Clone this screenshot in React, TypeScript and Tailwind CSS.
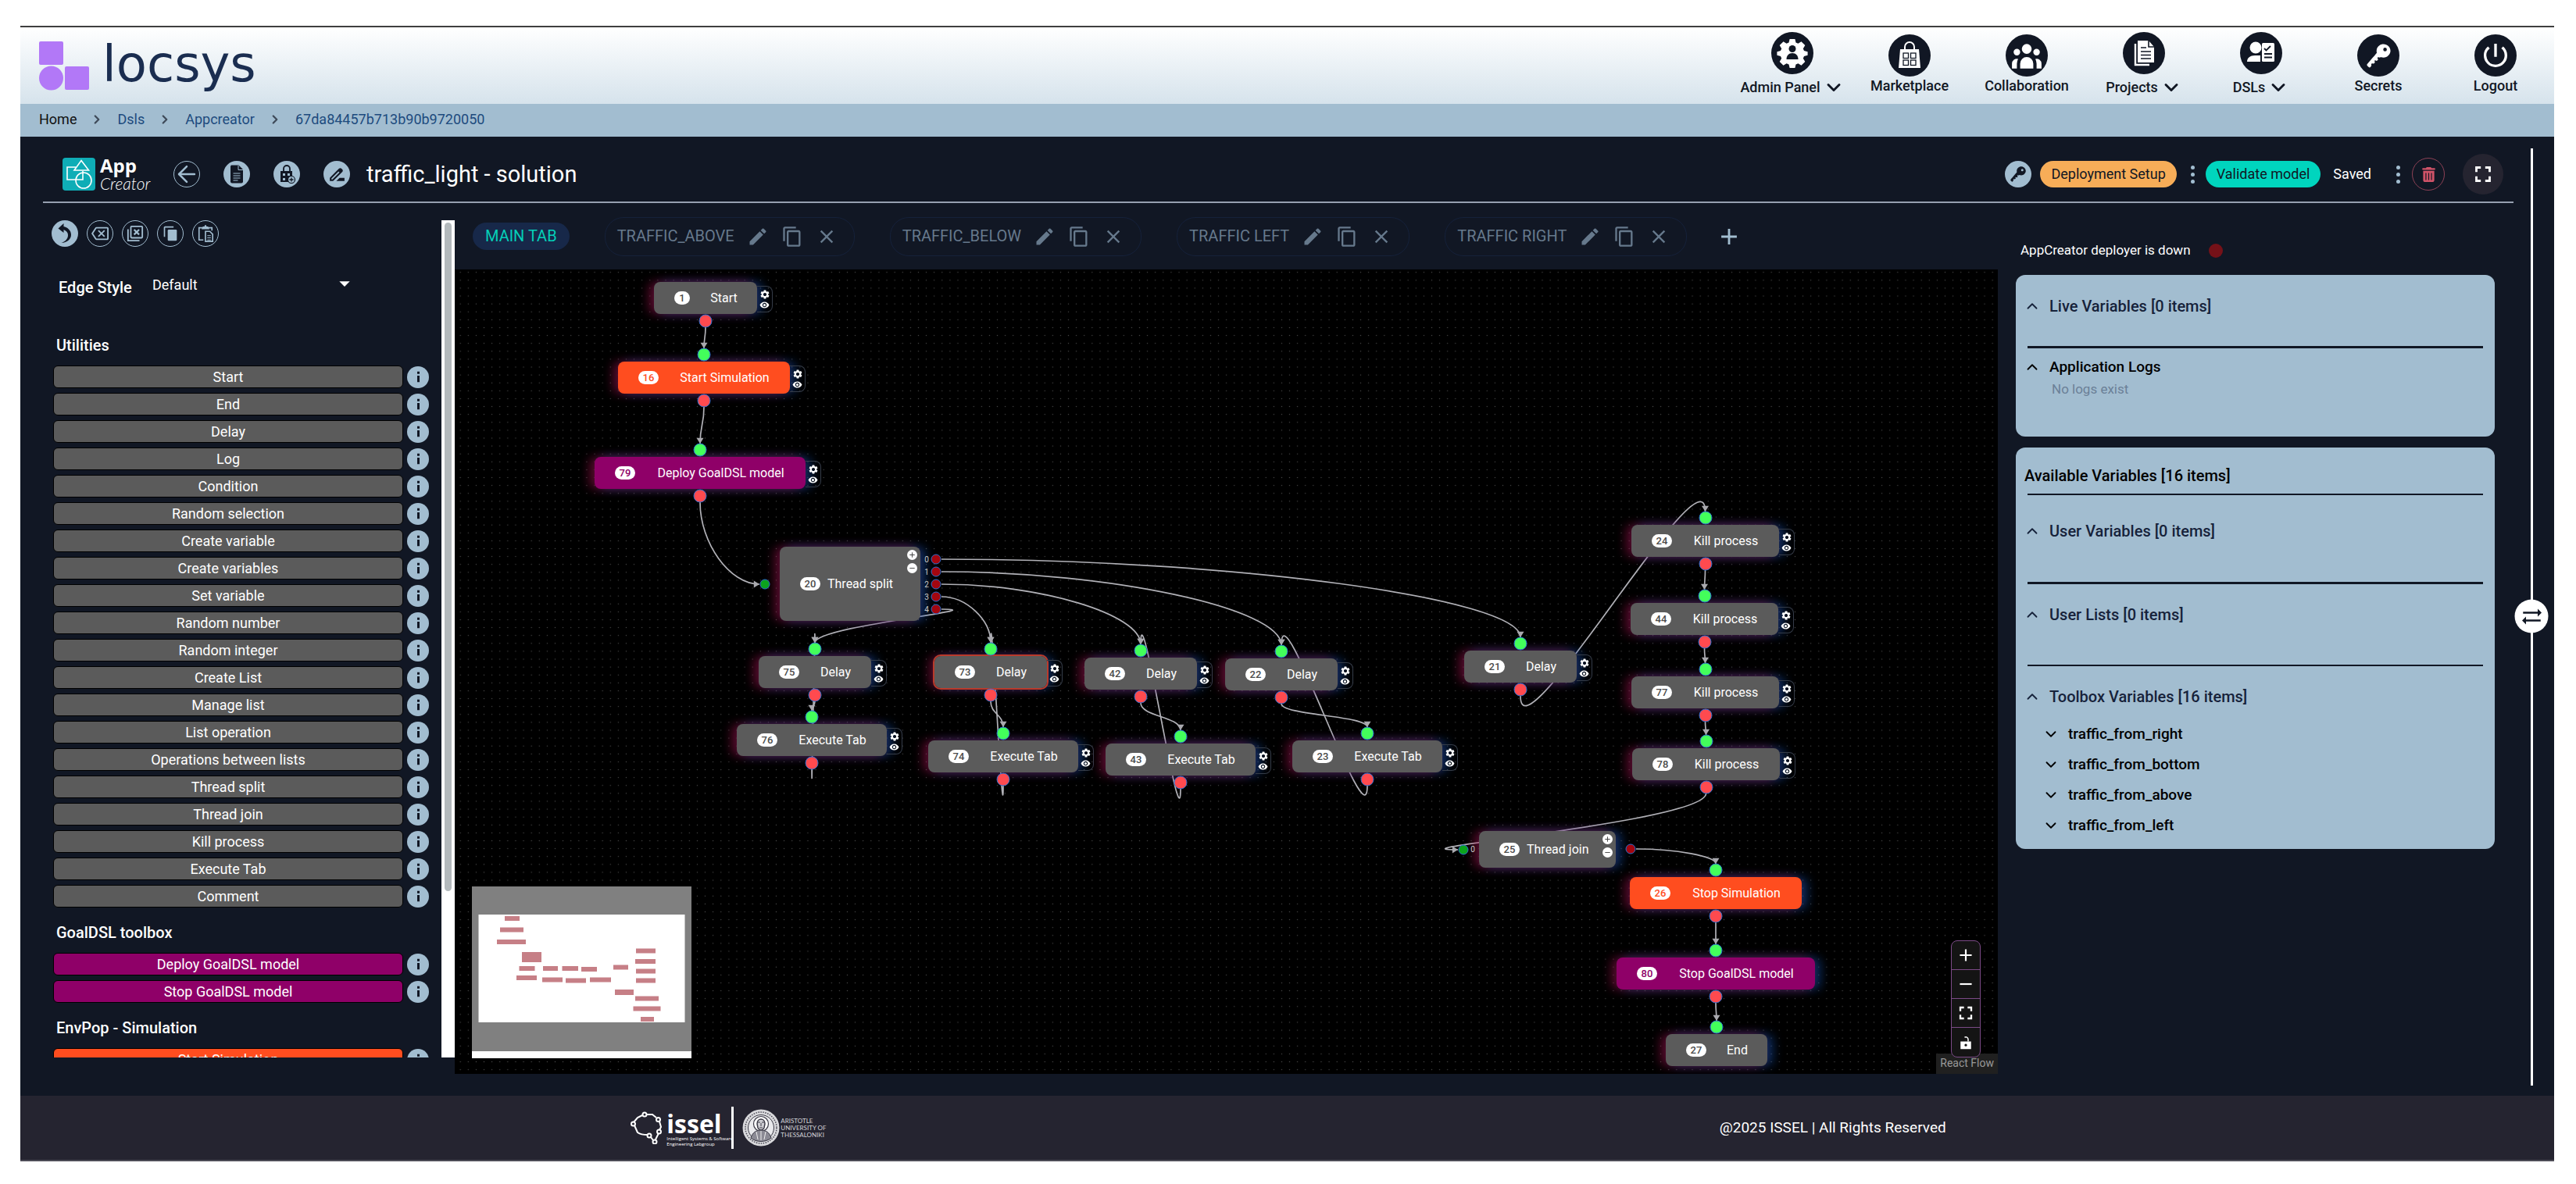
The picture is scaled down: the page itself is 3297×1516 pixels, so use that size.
import { ReactNode } from 'react';
import {
  MdAdd,
  MdArrowDropDown,
  MdClose,
  MdContentCopy,
  MdDriveFileRenameOutline,
  MdEdit,
  MdFullscreen,
  MdOutlineBackspace,
  MdPowerSettingsNew,
  MdRemove,
  MdSettings,
  MdSyncAlt,
  MdVisibility,
} from 'react-icons/md';
import { HiUserGroup } from 'react-icons/hi';
import { IoKey } from 'react-icons/io5';
import { FaTrashCan } from 'react-icons/fa6';
import { ArrowLeft, ChevronDown, ChevronRight, ChevronUp } from 'lucide-react';
import clsx from 'clsx';

/* ---------- ICONS ---------- */

const AdminIcon = () => (
  <svg viewBox="0 0 40 40" className="w-10 h-10">
    <path
      fill="#fff"
      d="M16.6 2h6.8l1.1 4.6 2.9 1.2 4.1-2.5 4.8 4.8-2.5 4.1 1.2 2.9 4.6 1.1v4.6l-4.6 1.1-1.2 2.9 2.5 4.1-4.8 4.8-4.1-2.5-2.9 1.2-1.1 4.6h-6.8l-1.1-4.6-2.9-1.2-4.1 2.5-4.8-4.8 2.5-4.1L5 23.9l-4.6-1.1v-4.6L5 17.1l1.2-2.9-2.5-4.1 4.8-4.8 4.1 2.5 2.9-1.2z"
    />
    <circle cx="20" cy="14.500" r="4.500" fill="#111724" />
    <path fill="#111724" d="M12.500 28c0-5 3-8 7.500-8s7.500 3 7.500 8z" />
  </svg>
);

const BagIcon = () => (
  <svg viewBox="0 0 40 40" className="w-10 h-10" fill="none">
    <path d="M14 13V9a6 6 0 0 1 12 0v4" stroke="#fff" strokeWidth="2" />
    <path d="M8 12h24l2 24H6z" fill="#fff" />
    <g stroke="#111724" strokeWidth="1.300">
      <rect x="12" y="17" width="6.500" height="6.500" />
      <rect x="21.500" y="17" width="6.500" height="6.500" />
      <rect x="12" y="26" width="6.500" height="6.500" />
      <rect x="21.500" y="26" width="6.500" height="6.500" />
    </g>
  </svg>
);

const ProjectsIcon = () => (
  <svg viewBox="0 0 40 40" className="w-10 h-10" fill="none">
    <path d="M9 8v27h18" stroke="#fff" strokeWidth="2.400" />
    <path d="M12 4h14l7 8v20H12z" fill="#fff" />
    <path d="M26 4v8h7M16 13h7M16 18h13M16 22.500h13M16 27h13" stroke="#111724" strokeWidth="1.600" />
  </svg>
);

const DslIcon = () => (
  <svg viewBox="0 0 40 40" className="w-10 h-10" fill="none">
    <circle cx="13" cy="13" r="7.500" fill="#fff" />
    <path d="M2 31c0-5 4-8 10-8h7v8z" fill="#fff" />
    <rect x="21" y="7" width="16" height="24" rx="1.500" fill="#fff" />
    <path d="M24 14l2.500 2.500L32 11M24 21h10M24 25.500h10" stroke="#111724" strokeWidth="1.800" />
  </svg>
);

const FileIcon = () => (
  <svg viewBox="0 0 18 24" className="w-[18px] h-6" fill="none">
    <path d="M2 0.500h9.500L17 6v15.500a2 2 0 0 1-2 2H3a2 2 0 0 1-2-2v-20z" fill="#111724" />
    <path d="M11 1v5.500h6" stroke="#a2bdd0" />
    <path d="M4.500 11h9M4.500 14h9M4.500 17h9M4.500 20h6" stroke="#a2bdd0" strokeWidth="1.100" />
  </svg>
);

const LockGridIcon = () => (
  <svg viewBox="0 0 24 24" className="w-6 h-6" fill="none" stroke="#111724">
    <path d="M8 8V5a4 4 0 0 1 8 0v3" strokeWidth="1.800" />
    <rect x="4" y="8" width="15" height="14" fill="#111724" stroke="none" />
    <path d="M7 11h3v3H7zM13 11h3v3h-3zM7 17h3v3H7z" fill="#a2bdd0" stroke="none" />
    <circle cx="18" cy="19" r="4.500" fill="#a2bdd0" strokeWidth="1.200" />
    <path d="M18 16.500v5M15.500 19h5" strokeWidth="1.300" />
  </svg>
);

const UndoIcon = () => (
  <svg viewBox="0 0 34 34" className="w-[34px] h-[34px]" fill="#111724">
    <path d="M8.500 10.500L15.500 4v12z" />
    <path d="M14 8c6.500.5 11 5 11 10.500 0 6-5 10-12.500 10.500 5.500-2 8.500-5.500 8.500-10 0-4-3-6.500-7-7z" />
  </svg>
);

const BoxesCloseIcon = () => (
  <svg viewBox="0 0 24 24" className="w-[22px] h-[22px]" fill="none" stroke="currentColor" strokeWidth="2">
    <rect x="6" y="2" width="16" height="16" rx="1" />
    <path d="M2 6v16h16" />
    <path d="M10.500 6.500l7 7M17.500 6.500l-7 7" strokeWidth="2.400" />
  </svg>
);

const CopyFillIcon = () => (
  <svg viewBox="0 0 24 24" className="w-5 h-5" fill="currentColor">
    <rect x="8" y="6" width="14" height="17" rx="1.500" />
    <path d="M2 17V3c0-1 1-2 2-2h13v2H4v14z" />
  </svg>
);

const PasteIcon = () => (
  <svg viewBox="0 0 24 24" className="w-[22px] h-[22px]" fill="none" stroke="currentColor" strokeWidth="1.800">
    <path d="M9 21H3V4h18v4" />
    <path d="M8 5l1-2h2l1-2 1 2h2l1 2z" fill="currentColor" />
    <path d="M12 9h6l4 4v10H12z" />
    <path d="M14.500 15h5M14.500 18h5M14.500 21h5" strokeWidth="1.200" />
  </svg>
);

const UnlockIcon = () => (
  <svg viewBox="0 0 24 24" className="w-[18px] h-[18px]" fill="#fff">
    <path d="M3 10h18v13H3zm9 4a2.200 2.200 0 1 0 0 4.400 2.200 2.200 0 0 0 0-4.400z" fillRule="evenodd" />
    <path d="M16 10V6a4 4 0 0 0-6-3" fill="none" stroke="#fff" strokeWidth="2" />
  </svg>
);

/* ---------- HEADER ---------- */

const navItems: { label: string; icon: ReactNode; menu?: boolean }[] = [
  { label: 'Admin Panel', icon: <AdminIcon />, menu: true },
  { label: 'Marketplace', icon: <BagIcon /> },
  { label: 'Collaboration', icon: <HiUserGroup size={42} /> },
  { label: 'Projects', icon: <ProjectsIcon />, menu: true },
  { label: 'DSLs', icon: <DslIcon />, menu: true },
  { label: 'Secrets', icon: <IoKey size={37} /> },
  { label: 'Logout', icon: <MdPowerSettingsNew size={40} /> },
];

const Header = () => (
  <header className="flex justify-between h-[100px] border-t-2 border-[#3f3f3f] bg-gradient-to-b from-white to-[#d6e3ec]">
    <a href="#home" className="flex items-center gap-[17px] pl-6">
      <svg viewBox="0 0 64 64" className="w-16 h-16" fill="#b278f7">
        <rect x="0" y="1" width="31" height="30" rx="2" />
        <circle cx="15.500" cy="48" r="15.500" />
        <rect x="33" y="33" width="31" height="30" rx="2" />
      </svg>
      <span className="font-['DejaVu_Sans',sans-serif] text-[64px] leading-[72px] text-[#1a2d50] pb-1">locsys</span>
    </a>
    <nav className="flex pt-[6px]">
      {navItems.map((item) => (
        <a key={item.label} href="#nav" className="w-[150px] flex flex-col items-center text-[#111724]">
          <span
            className={clsx(
              'w-[54px] h-[54px] rounded-full bg-[#111724] text-white flex items-center justify-center',
              item.menu ? 'mb-[3px]' : 'mt-[3px]',
            )}
          >
            {item.icon}
          </span>
          <span className="flex items-center gap-[3px] text-lg leading-6 font-medium">
            {item.label}
            {item.menu && <ChevronDown size={28} strokeWidth={2.5} />}
          </span>
        </a>
      ))}
    </nav>
  </header>
);

const Crumb = () => <ChevronRight size={18} strokeWidth={3} className="text-[#3e4a58]" />;

const Breadcrumbs = () => (
  <nav className="flex items-center gap-[17px] h-[42px] px-6 pb-[3px] bg-[#a2bdd0] text-lg text-[#1d4b7e]">
    <a href="#home" className="text-[#111]">Home</a>
    <Crumb />
    <a href="#dsls">Dsls</a>
    <Crumb />
    <a href="#appcreator">Appcreator</a>
    <Crumb />
    <a href="#model">67da84457b713b90b9720050</a>
  </nav>
);

/* ---------- TOOLBAR ---------- */

const RoundButton = ({ label, filled, children }: { label: string; filled?: boolean; children: ReactNode }) => (
  <button
    aria-label={label}
    className={clsx(
      'w-[34px] h-[34px] rounded-full flex items-center justify-center shrink-0',
      filled ? 'bg-[#a2bdd0] text-[#111724]' : 'border border-[#a2bdd0] text-[#a2bdd0]',
    )}
  >
    {children}
  </button>
);

const Dots = () => (
  <span className="flex flex-col gap-1">
    <i className="w-[5px] h-[5px] rounded-full bg-[#a2bdd0]" />
    <i className="w-[5px] h-[5px] rounded-full bg-[#a2bdd0]" />
    <i className="w-[5px] h-[5px] rounded-full bg-[#a2bdd0]" />
  </span>
);

const Toolbar = () => (
  <div className="flex items-center justify-between h-[72px] pl-[25px] border-b-2 border-[#97a0b0]">
    <div className="flex items-center gap-[29px]">
      <div className="flex items-center gap-[6px] w-[113px]">
        <svg viewBox="0 0 42 42" className="w-[42px] h-[42px] shrink-0" fill="none" stroke="#fff" strokeWidth="1.600">
          <rect width="42" height="42" rx="4" fill="#0fadb6" stroke="none" />
          <path d="M24 3.500L33.500 16H15z" />
          <path d="M17 12H6v16h20V17" />
          <circle cx="27" cy="29" r="10" />
        </svg>
        <div className="text-white">
          <div className="font-['Open_Sans',sans-serif] text-[24px] leading-6 font-bold">App</div>
          <div className="font-['Lato',sans-serif] text-[21px] leading-[22px] font-light italic">Creator</div>
        </div>
      </div>
      <div className="flex items-center gap-[30px]">
        <RoundButton label="Back"><ArrowLeft size={34} strokeWidth={1.75} className="shrink-0" /></RoundButton>
        <RoundButton label="Documentation" filled><FileIcon /></RoundButton>
        <RoundButton label="Access" filled><LockGridIcon /></RoundButton>
        <div className="flex items-center gap-[21px]">
          <RoundButton label="Rename" filled><MdDriveFileRenameOutline size={25} /></RoundButton>
          <h1 className="text-[29px] leading-9 text-white">traffic_light - solution</h1>
        </div>
      </div>
    </div>
    <div className="flex items-center pr-[13px]">
      <RoundButton label="Secrets" filled><IoKey size={24} /></RoundButton>
      <button className="ml-[11px] h-[34px] px-[14px] rounded-full bg-[#f7ad58] text-lg text-[#111724]">Deployment Setup</button>
      <span className="ml-[18px] mr-[14px]"><Dots /></span>
      <button className="h-[34px] px-[14px] rounded-full bg-[#00d5be] text-lg text-[#111724]">Validate model</button>
      <span className="ml-4 mr-8 text-lg text-white">Saved</span>
      <Dots />
      <button aria-label="Delete" className="ml-[15px] w-[42px] h-[42px] rounded-full border border-[#8c4155] text-[#cf5368] flex items-center justify-center">
        <FaTrashCan size={19} />
      </button>
      <button aria-label="Full screen" className="ml-[23px] w-[52px] h-[52px] rounded-full bg-[#252430] text-white flex items-center justify-center">
        <MdFullscreen size={34} />
      </button>
    </div>
  </div>
);

/* ---------- TOOLBOX ---------- */

const toolboxes = [
  {
    title: 'Utilities',
    color: 'bg-[#5b5b5b]',
    items: [
      'Start', 'End', 'Delay', 'Log', 'Condition', 'Random selection', 'Create variable', 'Create variables',
      'Set variable', 'Random number', 'Random integer', 'Create List', 'Manage list', 'List operation',
      'Operations between lists', 'Thread split', 'Thread join', 'Kill process', 'Execute Tab', 'Comment',
    ],
  },
  { title: 'GoalDSL toolbox', color: 'bg-[#8f0068]', items: ['Deploy GoalDSL model', 'Stop GoalDSL model'] },
  { title: 'EnvPop - Simulation', color: 'bg-[#ff4d1f]', items: ['Start Simulation'] },
];

const Toolbox = () => (
  <aside className="flex w-[527px] shrink-0 mt-[22px] mb-9 h-[1072px] overflow-hidden">
    <div className="flex-1 pl-[11px]">
      <div className="flex gap-[11px]">
        <RoundButton label="Undo" filled><UndoIcon /></RoundButton>
        <RoundButton label="Delete selected"><MdOutlineBackspace size={22} /></RoundButton>
        <RoundButton label="Clear all"><BoxesCloseIcon /></RoundButton>
        <RoundButton label="Copy"><CopyFillIcon /></RoundButton>
        <RoundButton label="Paste"><PasteIcon /></RoundButton>
      </div>
      <div className="flex items-center mt-8 pl-[9px] text-white">
        <label htmlFor="edge" className="w-[120px] pt-[6px] text-xl font-medium">Edge Style</label>
        <div className="relative w-[262px]">
          <select id="edge" className="w-full appearance-none bg-transparent text-lg">
            <option>Default</option>
          </select>
          <MdArrowDropDown size={32} className="absolute right-0 -top-1 pointer-events-none" />
        </div>
      </div>
      <div className="mt-[46px]">
        {toolboxes.map((box) => (
          <section key={box.title} className="mb-[18px]">
            <h2 className="pl-[6px] pb-3 text-xl leading-7 font-medium text-white">{box.title}</h2>
            <ul className="flex flex-col gap-[6px] pl-[2px]">
              {box.items.map((item) => (
                <li key={item} className="flex items-center gap-[5px]">
                  <button className={clsx('w-[448px] h-[29px] rounded-md border border-black text-lg leading-none text-white', box.color)}>
                    {item}
                  </button>
                  <button aria-label={`About ${item}`} className="w-7 h-7 rounded-full bg-[#a2bdd0] flex items-center justify-center">
                    <svg viewBox="0 0 12 20" className="w-[9px] h-[15px]" fill="#111724">
                      <rect x="4" y="1" width="4" height="4" />
                      <rect x="4" y="8" width="4" height="11" />
                    </svg>
                  </button>
                </li>
              ))}
            </ul>
          </section>
        ))}
      </div>
    </div>
    <div className="w-[17px] bg-white px-1 pt-[3px]">
      <div className="h-[856px] rounded-full bg-[#b3b9bc]" />
    </div>
  </aside>
);

/* ---------- TABS ---------- */

const tabs = ['TRAFFIC_ABOVE', 'TRAFFIC_BELOW', 'TRAFFIC LEFT', 'TRAFFIC RIGHT'];

const Tabs = () => (
  <div className="flex items-center gap-[45px] h-[85px] pl-[23px] text-[20px]">
    <button className="h-[35px] px-4 pb-0.5 rounded-full bg-[#172849] text-[#05cfb8]">MAIN TAB</button>
    {tabs.map((tab) => (
      <div key={tab} className="flex items-center gap-4 h-[50px] pl-[15px] pr-[21px] rounded-[24px] border border-[#15213a] text-[#66798c]">
        <button className="pb-0.5">{tab}</button>
        <button aria-label={`Rename ${tab}`}><MdEdit size={28} /></button>
        <button aria-label={`Duplicate ${tab}`}><MdContentCopy size={28} /></button>
        <button aria-label={`Close ${tab}`}><MdClose size={28} /></button>
      </div>
    ))}
    <button aria-label="Add tab" className="text-[#a2bdd0] -ml-2"><MdAdd size={34} /></button>
  </div>
);

/* ---------- FLOW CANVAS ---------- */

type FlowNode = {
  id: number;
  label: string;
  x: number;
  y: number;
  w: number;
  kind?: 'sim' | 'goal';
  tag?: boolean;
  selected?: boolean;
};

const nodes: FlowNode[] = [
  { id: 1, label: 'Start', x: 255, y: 16, w: 132, tag: true },
  { id: 16, label: 'Start Simulation', x: 209, y: 118, w: 220, kind: 'sim', tag: true },
  { id: 79, label: 'Deploy GoalDSL model', x: 179, y: 240, w: 270, kind: 'goal', tag: true },
  { id: 75, label: 'Delay', x: 389, y: 495, w: 144, tag: true },
  { id: 73, label: 'Delay', x: 614, y: 495, w: 144, tag: true, selected: true },
  { id: 42, label: 'Delay', x: 806, y: 497, w: 144, tag: true },
  { id: 22, label: 'Delay', x: 986, y: 498, w: 144, tag: true },
  { id: 76, label: 'Execute Tab', x: 361, y: 582, w: 192, tag: true },
  { id: 74, label: 'Execute Tab', x: 606, y: 603, w: 192, tag: true },
  { id: 43, label: 'Execute Tab', x: 833, y: 607, w: 192, tag: true },
  { id: 23, label: 'Execute Tab', x: 1072, y: 603, w: 192, tag: true },
  { id: 21, label: 'Delay', x: 1292, y: 488, w: 144, tag: true },
  { id: 24, label: 'Kill process', x: 1506, y: 327, w: 189, tag: true },
  { id: 44, label: 'Kill process', x: 1505, y: 427, w: 189, tag: true },
  { id: 77, label: 'Kill process', x: 1506, y: 521, w: 189, tag: true },
  { id: 78, label: 'Kill process', x: 1507, y: 613, w: 189, tag: true },
  { id: 26, label: 'Stop Simulation', x: 1504, y: 778, w: 220, kind: 'sim' },
  { id: 80, label: 'Stop GoalDSL model', x: 1487, y: 881, w: 254, kind: 'goal' },
  { id: 27, label: 'End', x: 1550, y: 979, w: 130 },
];

const byId = (id: number) => nodes.find((n) => n.id === id)!;
const bottomOf = (id: number) => ({ x: byId(id).x + byId(id).w / 2, y: byId(id).y + 58 });
const topOf = (id: number) => ({ x: byId(id).x + byId(id).w / 2, y: byId(id).y - 17 });

type Point = { x: number; y: number };

const reach = (d: number) => (d >= 0 ? d / 2 : 5.8 * Math.sqrt(-d));

const down = (s: Point, t: Point) => {
  const o = reach(t.y - s.y);
  return `M${s.x} ${s.y}C${s.x} ${s.y + o} ${t.x} ${t.y - o} ${t.x} ${t.y}`;
};
const downToLeft = (s: Point, t: Point) =>
  `M${s.x} ${s.y}C${s.x} ${s.y + reach(t.y - s.y)} ${t.x - reach(t.x - s.x)} ${t.y} ${t.x} ${t.y}`;
const rightToTop = (s: Point, t: Point) =>
  `M${s.x} ${s.y}C${s.x + reach(t.x - s.x)} ${s.y} ${t.x} ${t.y - reach(t.y - s.y)} ${t.x} ${t.y}`;

const splitPorts = [371, 387, 403, 419, 435];
const splitTargets = [21, 22, 42, 73, 75];

const edges = [
  ...[[1, 16], [16, 79], [75, 76], [73, 74], [42, 43], [22, 23], [76, 75], [74, 73], [43, 42], [23, 22],
    [21, 24], [24, 44], [44, 77], [77, 78], [26, 80], [80, 27]].map(([a, b]) => down(bottomOf(a), topOf(b))),
  downToLeft(bottomOf(79), { x: 390, y: 403 }),
  downToLeft(bottomOf(78), { x: 1284, y: 743 }),
  ...splitPorts.map((y, i) => rightToTop({ x: 623, y }, topOf(splitTargets[i]))),
  rightToTop({ x: 1512, y: 742 }, topOf(26)),
];

const glow = 'shadow-[-7px_0_13px_rgba(170,20,80,0.5),7px_0_13px_rgba(25,90,190,0.5)]';

const Badge = ({ id, className }: { id: number; className?: string }) => (
  <span
    className={clsx(
      'h-[17px] rounded-full bg-white text-[13px] leading-[17px] font-medium text-center shrink-0',
      id < 10 ? 'w-5' : 'w-[26px]',
      className,
    )}
  >
    {id}
  </span>
);

const Handle = ({ x, y, color, small }: { x: number; y: number; color: string; small?: boolean }) => (
  <span
    className={clsx('absolute -translate-1/2 rounded-full border border-[#2c6fce]', color, small ? 'size-[13px]' : 'size-[17px]')}
    style={{ left: x, top: y }}
  />
);

const NodeView = ({ node }: { node: FlowNode }) => (
  <>
    <div
      className={clsx(
        'absolute h-[41px] rounded-[8px] flex items-center pl-[26px] text-base text-white whitespace-nowrap',
        glow,
        node.kind === 'sim' ? 'bg-[#ff4d1f]' : node.kind === 'goal' ? 'bg-[#8f0068]' : 'bg-[#5b5b5b]',
        node.selected && 'outline-2 outline-[#b93a2b]',
      )}
      style={{ left: node.x, top: node.y, width: node.w }}
    >
      <Badge
        id={node.id}
        className={node.kind === 'sim' ? 'text-[#ff4d1f]' : node.kind === 'goal' ? 'text-[#8f0068]' : 'text-[#4b4b4b]'}
      />
      <span className="flex-1 ml-[26px] mr-[25px] text-center">{node.label}</span>
      {node.tag && (
        <div className="absolute left-full top-[5px] w-5 h-[34px] rounded-r-lg border border-l-0 border-[#353c48] flex flex-col items-center pt-[3px]">
          <MdSettings size={14} />
          <MdVisibility size={13} />
        </div>
      )}
    </div>
    {node.id !== 1 && <Handle x={node.x + node.w / 2} y={node.y - 9} color="bg-[#43ff5b]" />}
    {node.id !== 27 && <Handle x={node.x + node.w / 2} y={node.y + 50} color="bg-[#ff4a4f]" />}
  </>
);

const PlusMinus = () => (
  <div className="absolute top-1 right-1 flex flex-col gap-1">
    <button aria-label="Add thread" className="size-[13px] rounded-full bg-white text-[#444] flex items-center justify-center">
      <MdAdd size={11} />
    </button>
    <button aria-label="Remove thread" className="size-[13px] rounded-full bg-white text-[#444] flex items-center justify-center">
      <MdRemove size={11} />
    </button>
  </div>
);

const MiniMap = () => (
  <svg viewBox="0 0 281 220" className="absolute left-[22px] bottom-5 w-[281px] h-[220px]">
    <rect width="281" height="220" fill="#fff" />
    <rect width="281" height="211" fill="#808080" />
    <rect x="8.500" y="36" width="264" height="138" fill="#fff" />
    <g fill="#c67f86">
      {[
        [42, 38, 19, 6], [36, 52.5, 30, 6], [32, 68, 37, 6], [64, 84, 25, 13], [60.5, 102, 20, 6],
        [91, 102, 19, 6], [115.5, 102, 20.5, 6], [140, 103, 20, 6], [57, 114, 26, 6], [90, 116.5, 26, 6],
        [120, 117.5, 26, 6], [151, 116.5, 27, 6], [181, 100.5, 19, 6], [210, 79.5, 25, 6],
        [209, 93, 26, 6], [210, 105.5, 25, 6], [210, 117.5, 25, 6], [183, 132, 24, 7], [209, 140.5, 30, 6],
        [206.5, 153.5, 35, 6], [216, 167, 17, 6],
      ].map(([x, y, w, h]) => (
        <rect key={`${x}-${y}`} x={x} y={y} width={w} height={h} />
      ))}
    </g>
  </svg>
);

const Canvas = () => (
  <div className="relative min-h-[1030px] bg-black overflow-hidden">
    <svg className="absolute inset-0 w-full h-full">
      <defs>
        <pattern id="dots" x="2.150" y="-1.350" width="10.108" height="10.108" patternUnits="userSpaceOnUse">
          <circle cx="5.050" cy="5.050" r="0.700" fill="#484848" />
        </pattern>
        <marker id="arrow" viewBox="-10 -10 20 20" refX="0" refY="0" markerWidth="18" markerHeight="18" markerUnits="userSpaceOnUse" orient="auto">
          <path d="M-8 -5L0 0L-8 5z" fill="#a9a9ae" />
        </marker>
      </defs>
      <rect width="100%" height="100%" fill="url(#dots)" />
      <g fill="none" stroke="#b1b1b7" strokeWidth="1.700">
        {edges.map((d) => (
          <path key={d} d={d} markerEnd="url(#arrow)" />
        ))}
      </g>
    </svg>

    {nodes.map((node) => (
      <NodeView key={node.id} node={node} />
    ))}

    {/* thread split */}
    <div className={clsx('absolute left-[416px] top-[355px] w-[180px] h-[95px] rounded-[8px] bg-[#5b5b5b] flex items-center gap-[9px] pl-[26px] text-base text-white', glow)}>
      <Badge id={20} className="text-[#4b4b4b]" />
      <span>Thread split</span>
      <PlusMinus />
    </div>
    <Handle x={397} y={403} color="bg-[#0ca31d]" small />
    {splitPorts.map((y, i) => (
      <div key={y}>
        <span className="absolute -translate-1/2 text-[10px] leading-none text-[#ccc]" style={{ left: 604, top: y + 1 }}>{i}</span>
        <Handle x={616} y={y} color="bg-[#a3060f]" small />
      </div>
    ))}

    {/* thread join */}
    <div className={clsx('absolute left-[1311px] top-[719px] w-[175px] h-[47px] rounded-[8px] bg-[#5b5b5b] flex items-center gap-[9px] pl-[26px] text-base text-white', glow)}>
      <Badge id={25} className="text-[#4b4b4b]" />
      <span>Thread join</span>
      <PlusMinus />
    </div>
    <Handle x={1291} y={743} color="bg-[#0ca31d]" small />
    <span className="absolute -translate-1/2 left-[1303px] top-[743px] text-[10px] leading-none text-[#ccc]">0</span>
    <Handle x={1505} y={742} color="bg-[#a3060f]" small />

    <MiniMap />
    <span className="absolute right-0 bottom-0 h-[26px] px-[5px] bg-[#202020] text-sm leading-6 text-[#999]">React Flow</span>
    <div className="absolute right-[22px] bottom-[21px] w-[38px] rounded-lg border border-[#7b4a86] bg-[#141414] text-white divide-y divide-[#7b4a86]">
      <button aria-label="Zoom in" className="w-full h-[37px] flex items-center justify-center"><MdAdd size={26} /></button>
      <button aria-label="Zoom out" className="w-full h-[37px] flex items-center justify-center"><MdRemove size={26} /></button>
      <button aria-label="Fit view" className="w-full h-[37px] flex items-center justify-center"><MdFullscreen size={28} /></button>
      <button aria-label="Lock" className="w-full h-[37px] flex items-center justify-center"><UnlockIcon /></button>
    </div>
  </div>
);

/* ---------- VARIABLES ---------- */

const Fold = ({ title, dark }: { title: string; dark?: boolean }) => (
  <button
    className={clsx(
      '-ml-[5px] flex items-center gap-[11px] leading-7 font-medium',
      dark ? 'text-[19px] text-black' : 'text-xl text-[#16223a]',
    )}
  >
    <ChevronUp size={22} strokeWidth={2} />
    {title}
  </button>
);

const Variables = () => (
  <aside className="w-[660px] shrink-0 pl-[23px] pr-6 pt-[47px]">
    <div className="flex items-center gap-[23px] h-7 pl-[6px] text-[17px] text-white">
      AppCreator deployer is down
      <i className="size-[18px] rounded-full bg-[#751118]" />
    </div>
    <div className="mt-[17px] h-[207px] rounded-xl bg-[#a2bdd0] px-[15px] pt-[26px]">
      <Fold title="Live Variables [0 items]" />
      <hr className="mt-[37px] mb-[10px] border-t-[3px] border-[#111724]" />
      <Fold title="Application Logs" dark />
      <p className="pl-[31px] text-[17px] leading-7 text-[#6b8097]">No logs exist</p>
    </div>
    <div className="mt-[14px] rounded-xl bg-[#a2bdd0] px-[15px] pt-[22px] pb-4">
      <h2 className="-ml-1 text-xl leading-7 font-medium text-black">Available Variables [16 items]</h2>
      <hr className="mt-[9px] mb-8 border-t-2 border-[#111724]" />
      <Fold title="User Variables [0 items]" />
      <hr className="mt-[51px] mb-[25px] border-t-[3px] border-[#111724]" />
      <Fold title="User Lists [0 items]" />
      <hr className="mt-[50px] mb-[25px] border-t-2 border-[#111724]" />
      <Fold title="Toolbox Variables [16 items]" />
      <ul className="mt-5 flex flex-col gap-[11px] pl-[19px]">
        {['traffic_from_right', 'traffic_from_bottom', 'traffic_from_above', 'traffic_from_left'].map((name) => (
          <li key={name}>
            <button className="flex items-center gap-[11px] text-[19px] leading-7 font-medium text-black">
              <ChevronDown size={22} strokeWidth={2} />
              {name}
            </button>
          </li>
        ))}
      </ul>
    </div>
  </aside>
);

/* ---------- FOOTER ---------- */

const Footer = () => (
  <footer className="flex items-center justify-between h-[84px] px-[24%] bg-[#252430] border-b-2 border-[#4d4c57] text-white">
    <div className="flex items-center pl-[3px]">
      <svg viewBox="0 0 42 42" className="w-[42px] h-[42px]" fill="none" stroke="#fff" strokeWidth="2">
        <path d="M15 5L9 8l-5 6M5 18l4 9c3 2 8 3 13 3M21 4h7l5 4M37 13l2 7-2 4M36 28l-4 8M26 33l3 4" />
        <circle cx="18" cy="4" r="2.500" />
        <circle cx="3.500" cy="16" r="2.500" />
        <circle cx="35.500" cy="10.500" r="2.500" />
        <circle cx="36.500" cy="26" r="2.500" />
        <circle cx="24" cy="31" r="2.500" />
        <circle cx="31" cy="39" r="2.500" />
      </svg>
      <div className="ml-1 w-[72px] pt-1 font-['Open_Sans',sans-serif]">
        <div className="text-[32px] leading-8 font-bold">issel</div>
        <div className="text-[6px] leading-[7px] whitespace-nowrap">Intelligent Systems &amp; Software<br />Engineering Labgroup</div>
      </div>
      <div className="mx-[11px] w-[3px] h-[54px] bg-white" />
      <svg viewBox="0 0 48 48" className="w-12 h-12">
        <circle cx="24" cy="24" r="23.500" fill="#d9d9dc" />
        <circle cx="24" cy="24" r="20" fill="none" stroke="#4a4955" strokeWidth="1.500" strokeDasharray="1.500 1.500" />
        <circle cx="24" cy="24" r="16.500" fill="#e9e9ec" stroke="#3a3945" />
        <circle cx="24" cy="19" r="9.500" fill="#fff" stroke="#3a3945" strokeWidth="1.200" />
        <path d="M19 19c0-8 10-8 10 0l-1 5c-2 4-6 4-8 0z" fill="#d0d0d5" stroke="#3a3945" strokeWidth="1.500" />
        <path d="M20 17h3M25 17h3M24 18v4M22 24h4" stroke="#3a3945" />
        <path d="M11 37c2-7 7-10 13-10s11 3 13 10c-7 6-19 6-26 0z" fill="#8b8a94" stroke="#3a3945" />
        <path d="M18 29l2 10M24 28v12M30 29l-2 10" stroke="#eee" />
      </svg>
      <div className="ml-px text-[8px] leading-[9px] text-[#d5d5da] font-['Lato',sans-serif]">
        ARISTOTLE<br />UNIVERSITY OF<br />THESSALONIKI
      </div>
    </div>
    <span className="text-[19px]">@2025 ISSEL | All Rights Reserved</span>
  </footer>
);

export default function App() {
  return (
    <div className="bg-white pt-[33px] pb-[29px] pl-[26px] pr-[28px] font-['Roboto',sans-serif]">
      <Header />
      <Breadcrumbs />
      <main className="flex bg-[#111724] py-[13px]">
        <div className="flex-1 min-w-0 pl-[29px]">
          <Toolbar />
          <div className="flex">
            <Toolbox />
            <div className="flex-1 min-w-0">
              <Tabs />
              <Canvas />
            </div>
            <Variables />
          </div>
        </div>
        <div className="relative w-[52px] shrink-0 flex justify-center pr-[6px] pt-[2px]">
          <div className="w-[3px] bg-white" />
          <button
            aria-label="Resize panels"
            className="absolute top-1/2 left-[23px] -translate-1/2 size-[43px] rounded-full bg-white text-[#111724] flex items-center justify-center"
          >
            <MdSyncAlt size={30} />
          </button>
        </div>
      </main>
      <Footer />
    </div>
  );
}
